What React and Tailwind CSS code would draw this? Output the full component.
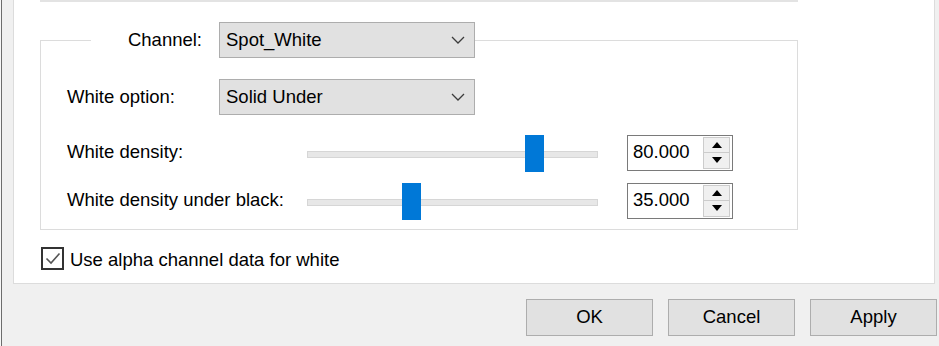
import React from 'react';

// Print settings dialog – white ink panel

const Chevron = () => (
  <svg width="14" height="8" viewBox="0 0 14 8" className="shrink-0">
    <polyline points="1,1 7,7 13,1" fill="none" stroke="#3c3c3c" strokeWidth="1.3" />
  </svg>
);

const ComboBox = ({ value }) => (
  <div className="flex h-[36px] w-[256px] items-center justify-between border border-[#adadad] bg-[#e1e1e1] pl-[6px] pr-[9px]">
    <span>{value}</span>
    <Chevron />
  </div>
);

const Slider = ({ value }) => {
  const left = Math.round((291 - 19) * (value / 100));
  return (
    <div className="relative flex h-[37px] w-[291px] items-center">
      <div className="mt-[3px] h-[7px] w-full border border-[#d6d6d6] bg-[#e7e7e7]" />
      <div
        className="absolute top-[1px] h-[37px] w-[19px] bg-[#0078d7]"
        style={{ left }}
      />
    </div>
  );
};

const SpinBox = ({ value }) => (
  <div className="flex h-[36px] w-[106px] border border-[#7a7a7a] bg-white">
    <div className="flex flex-1 items-center pl-[5px]">{value}</div>
    <div className="my-[1px] mr-[2px] flex w-[27px] flex-col">
      <div className="flex flex-1 items-center justify-center border border-[#cccccc] bg-[#f0f0f0]">
        <svg width="10" height="6" viewBox="0 0 10 6">
          <polygon points="0,6 5,0 10,6" fill="#000" />
        </svg>
      </div>
      <div className="flex flex-1 items-center justify-center border border-t-0 border-[#cccccc] bg-[#f0f0f0]">
        <svg width="10" height="6" viewBox="0 0 10 6">
          <polygon points="0,0 10,0 5,6" fill="#000" />
        </svg>
      </div>
    </div>
  </div>
);

const SliderRow = ({ label, value, className }) => (
  <div className={`flex h-[37px] items-center ${className}`}>
    <span className="w-[240px]">{label}</span>
    <Slider value={value} />
    <div className="w-[29px]" />
    <SpinBox value={value.toFixed(3)} />
  </div>
);

const DialogButton = ({ children }) => (
  <button className="flex h-[37px] w-[127px] items-center justify-center border border-[#adadad] bg-[#e1e1e1]">
    {children}
  </button>
);

const App = () => {
  return (
    <div className="flex h-[346px] w-[939px] overflow-hidden bg-[#f0f0f0] font-['Liberation_Sans',Arial,sans-serif] text-[18.5px] leading-none text-black">
      <div className="h-full w-[1px] bg-[#f7f7f7]" />
      <div className="h-full w-[1px] bg-[#6d6d6d]" />
      <div className="flex flex-1 flex-col pl-[11px]">
        <div className="h-[284px] w-[922px] border-x border-b border-[#dcdcdc] bg-white pl-[26px]">
          <div className="h-[2px] w-[758px] bg-[#e3e3e3]" />
          <fieldset className="mt-[20px] w-[758px] border border-[#dcdcdc]">
            <legend className="ml-[50px] flex items-center bg-white">
              <span className="w-[111px] text-right">Channel:</span>
              <div className="w-[17px]" />
              <ComboBox value="Spot_White" />
            </legend>
            <div className="pb-[10px] pl-[26px]">
              <div className="mt-[21px] flex items-center">
                <span className="w-[152px]">White option:</span>
                <ComboBox value="Solid Under" />
              </div>
              <SliderRow className="mt-[19px]" label="White density:" value={80} />
              <SliderRow className="mt-[11px]" label="White density under black:" value={35} />
            </div>
          </fieldset>
          <label className="ml-[1px] mt-[17px] flex items-center">
            <span className="flex h-[23px] w-[23px] items-center justify-center border-2 border-[#333333]">
              <svg width="16" height="13" viewBox="0 0 16 13">
                <polyline points="1.5,6.5 6,11 14.5,1.5" fill="none" stroke="#555555" strokeWidth="1.6" />
              </svg>
            </span>
            <span className="ml-[6px] mt-[3px]">Use alpha channel data for white</span>
          </label>
        </div>
        <div className="mt-[15px] flex justify-end gap-[15px] pr-[2px]">
          <DialogButton>OK</DialogButton>
          <DialogButton>Cancel</DialogButton>
          <DialogButton>Apply</DialogButton>
        </div>
      </div>
    </div>
  );
};

export default App;
